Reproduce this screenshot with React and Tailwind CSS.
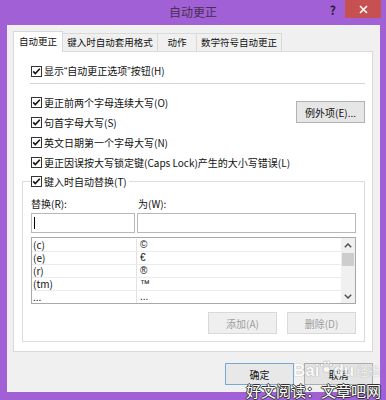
import React from "react";

const Check = () => (
  <svg width="11" height="11" viewBox="0 0 11 11" className="shrink-0">
    <rect x="0.5" y="0.5" width="10" height="10" fill="#fff" stroke="#333" />
    <path d="M2.2 5.4 L4.3 7.6 L8.8 2.8" fill="none" stroke="#111" strokeWidth="1.6" />
  </svg>
);

const Row = ({ children }) => (
  <div className="flex h-[20px] items-center gap-[2px] pl-[9px]">
    <Check />
    <span className="whitespace-nowrap">{children}</span>
  </div>
);

const Chevron = ({ down }) => (
  <svg width="8" height="5" viewBox="0 0 8 5">
    <path
      d={down ? "M0.8 0.8 L4 4 L7.2 0.8" : "M0.8 4.2 L4 1 L7.2 4.2"}
      fill="none"
      stroke="#505050"
      strokeWidth="1.5"
    />
  </svg>
);

const rows = [
  ["(c)", "©"],
  ["(e)", "€"],
  ["(r)", "®"],
  ["(tm)", "™"],
  ["...", "..."],
];

export default function App() {
  return (
    <div className="relative flex h-[400px] w-[386px] flex-col overflow-hidden bg-[#a160d6] font-['Noto_Sans_CJK_SC',sans-serif] text-[10px] text-[#111]">
      {/* title bar */}
      <div className="grid h-[25px] grid-cols-[1fr_auto_1fr]">
        <div />
        <div className="pt-[3px] text-[12px] leading-[18px] text-[#46304f]">自动更正</div>
        <div className="flex items-start justify-end">
          <span className="mr-[9px] mt-[2px] text-[12px] font-bold leading-[16px] text-[#2c1d38]">?</span>
          <div className="mr-[5px] flex h-[18px] w-[36px] items-center justify-center bg-[#c75050]">
            <svg width="9" height="9" viewBox="0 0 9 9">
              <path d="M1 1 L8 8 M8 1 L1 8" stroke="#fff" strokeWidth="1.6" />
            </svg>
          </div>
        </div>
      </div>

      {/* body */}
      <div className="mb-[8px] ml-[7px] mr-[6px] flex h-[367px] flex-col bg-[#f0f0f0] pl-[6px] pr-[7px] pt-[6px]">
        {/* tabs */}
        <div className="relative z-10 flex h-[20px] items-end">
          <div className="-mb-px flex h-[21px] w-[50px] items-center justify-center border border-b-0 border-[#d9d9d9] bg-white pb-[1px] text-[9.5px]">
            自动更正
          </div>
          <div className="-ml-px flex h-[18px] w-[96px] items-center justify-center border border-b-0 border-[#d9d9d9] bg-[#f0f0f0] text-[9.5px]">
            键入时自动套用格式
          </div>
          <div className="-ml-px flex h-[18px] w-[40px] items-center justify-center border border-b-0 border-[#d9d9d9] bg-[#f0f0f0] text-[9.5px]">
            动作
          </div>
          <div className="-ml-px flex h-[18px] w-[86px] items-center justify-center border border-b-0 border-[#d9d9d9] bg-[#f0f0f0] text-[9.5px]">
            数学符号自动更正
          </div>
        </div>

        {/* panel */}
        <div className="h-[301px] border border-[#d9d9d9] bg-white pl-[8px] pr-[7px] pt-[9px]">
          <Row>
            显示<span className="font-['Liberation_Sans',sans-serif]">“</span>自动更正选项
            <span className="font-['Liberation_Sans',sans-serif]">”</span>按钮(H)
          </Row>
          <div className="ml-[8px] mt-[2px] h-px bg-[#d5d5d5]" />
          <div className="mt-[8px] flex">
            <div className="flex-1">
              <Row>更正前两个字母连续大写(O)</Row>
              <Row>句首字母大写(S)</Row>
              <Row>英文日期第一个字母大写(N)</Row>
            </div>
            <div className="mt-[9px] flex h-[22px] w-[69px] items-center justify-center border border-[#b3b3b3] bg-[#e6e6e6]">
              例外项(E)...
            </div>
          </div>
          <Row>更正因误按大写锁定键(Caps Lock)产生的大小写错误(L)</Row>

          <fieldset className="mt-[2px] border border-[#dcdcdc] px-[8px] pb-[7px]">
            <legend className="pr-[2px]">
              <div className="flex h-[14px] items-center gap-[2px]">
                <Check />
                <span>键入时自动替换(T)</span>
              </div>
            </legend>
            <div className="mt-[8px] flex h-[14px] items-center">
              <span className="w-[107px]">替换(R):</span>
              <span>为(W):</span>
            </div>
            <div className="mt-[3px] flex gap-[2px]">
              <div className="flex h-[20px] w-[104px] items-center border border-[#b8b8b8] bg-white pl-[2px]">
                <div className="h-[12px] w-px bg-black" />
              </div>
              <div className="h-[20px] flex-1 border border-[#b8b8b8] bg-white" />
            </div>
            <div className="mt-[4px] flex h-[67px] border border-[#a8a8a8] bg-white">
              <div className="flex-1 overflow-hidden pt-[1px]">
                {rows.map(([a, b], i) => (
                  <div key={i} className="flex h-[13px] items-center border-b border-[#ebebeb] leading-[11px]">
                    <div className="w-[105px] self-stretch border-r border-[#e2e2e2] pl-[1px] leading-[12px]">{a}</div>
                    <div className="flex-1 pl-[3px] font-['Liberation_Sans',sans-serif] text-[10px] leading-[12px]">{b}</div>
                  </div>
                ))}
              </div>
              <div className="flex w-[14px] flex-col bg-[#f0f0f0]">
                <div className="flex h-[14px] items-center justify-center">
                  <Chevron />
                </div>
                <div className="mx-[1px] mt-[1px] h-[13px] bg-[#cdcdcd]" />
                <div className="flex-1" />
                <div className="flex h-[14px] items-center justify-center">
                  <Chevron down />
                </div>
              </div>
            </div>
            <div className="mt-[8px] flex justify-end gap-[10px]">
              <div className="flex h-[22px] w-[69px] items-center justify-center border border-[#d9d9d9] bg-[#efefef] text-[#9d9d9d]">
                添加(A)
              </div>
              <div className="flex h-[22px] w-[69px] items-center justify-center border border-[#d9d9d9] bg-[#efefef] text-[#9d9d9d]">
                删除(D)
              </div>
            </div>
          </fieldset>
        </div>

        {/* bottom buttons */}
        <div className="mt-[11px] flex justify-end gap-[10px]">
          <div className="flex h-[22px] w-[69px] items-center justify-center border border-[#78a9d6] bg-[#e8e8e8]">
            确定
          </div>
          <div className="flex h-[22px] w-[69px] items-center justify-center border border-[#adadad] bg-[#e3e3e3]">
            取消
          </div>
        </div>
      </div>

      {/* Baidu watermark */}
      <div className="pointer-events-none absolute left-[293px] top-[360px] flex items-end font-['Liberation_Sans',sans-serif] text-[17px] font-bold leading-[18px] text-white opacity-80 [text-shadow:0_0_1px_#999,0_0_1px_#999]">
        <span>Bai</span>
        <svg width="14" height="14" viewBox="0 0 14 14" className="mb-[6px]">
          <circle cx="3" cy="5" r="1.6" fill="#fff" stroke="#aaa" strokeWidth="0.6" />
          <circle cx="6" cy="2.5" r="1.6" fill="#fff" stroke="#aaa" strokeWidth="0.6" />
          <circle cx="9.5" cy="2.5" r="1.6" fill="#fff" stroke="#aaa" strokeWidth="0.6" />
          <circle cx="12" cy="5" r="1.6" fill="#fff" stroke="#aaa" strokeWidth="0.6" />
          <ellipse cx="7.5" cy="9.5" rx="3.5" ry="3" fill="#fff" stroke="#aaa" strokeWidth="0.6" />
        </svg>
        <span>du</span>
        <span className="ml-[2px] font-['Noto_Sans_CJK_SC',sans-serif] text-[12px] font-normal opacity-70">经验</span>
      </div>

      {/* site watermark */}
      <div className="pointer-events-none absolute bottom-[1px] right-[5px] text-[15px] leading-[16px] text-white [text-shadow:1px_0_0_#333,-1px_0_0_#333,0_1px_0_#333,0_-1px_0_#333]">
        好文阅读：文章吧网
      </div>
    </div>
  );
}
